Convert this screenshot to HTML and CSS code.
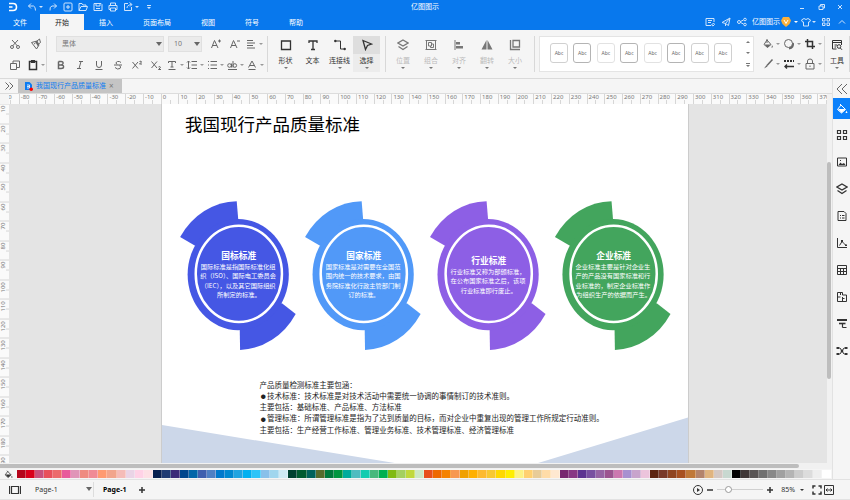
FILE: index.html
```html
<!DOCTYPE html>
<html lang="zh-CN">
<head>
    <meta charset="utf-8">
    <title>亿图图示</title>
    <link rel="stylesheet" href="styles.css">
    <script src="main.js" defer></script>
</head>
<body>
    <!-- 图标 -->
    <svg class="sprite" aria-hidden="true">
        <symbol id="i-undo" viewBox="0 0 12 12"><path d="M5 2.500 2.500 5 5 7.500M2.500 5H7.500Q9.500 5.500 9.500 9.500"/></symbol>
        <symbol id="i-redo" viewBox="0 0 12 12"><path d="M7 2.500 9.500 5 7 7.500M9.500 5H5Q2.500 5.500 3 9.500"/></symbol>
        <symbol id="i-new" viewBox="0 0 12 12"><rect x="2" y="2" width="8" height="8" rx="1"/><path d="M6 4v4M4 6h4"/></symbol>
        <symbol id="i-open" viewBox="0 0 12 12"><path d="M2 9.500V2.500H5L6 4H9V5.500M2 9.500 4 5.500H10.500L9 9.500Z"/></symbol>
        <symbol id="i-save" viewBox="0 0 12 12"><path d="M2 2.500H9L10 3.500V9.500H2ZM4 2.500V5H8V2.500M4 7.500H8"/></symbol>
        <symbol id="i-print" viewBox="0 0 12 12"><path d="M3.500 4V2H8.500V4M3.500 8.500H2V4.500H10V8.500H8.500M3.500 7H8.500V10H3.500Z"/></symbol>
        <symbol id="i-export" viewBox="0 0 12 12"><path d="M6 2.500H2.500V9.500H9.500V6M5 7Q5 4 9.500 3.500M7.500 1.500 10 3.500 8 5.500"/></symbol>
        <symbol id="i-more" viewBox="0 0 12 12"><path d="M4 4.500H8"/><path class="fill" d="M4 6H8L6 8Z"/></symbol>
        <symbol id="i-min" viewBox="0 0 12 12"><path d="M4 7.500H8"/></symbol>
        <symbol id="i-restore" viewBox="0 0 12 12"><path d="M4 5H8V8.500H4ZM5.500 5V3.500H9.500V7H8"/></symbol>
        <symbol id="i-close" viewBox="0 0 12 12"><path d="M4 4 8 8M8 4 4 8"/></symbol>
        <symbol id="i-note" viewBox="0 0 12 12"><path d="M7 9.500H2V2.500H10V6M4 4.500H8M4 6.500H7M7.500 9 9.500 7 10.500 8.500 9 10Z"/></symbol>
        <symbol id="i-send" viewBox="0 0 12 12"><path d="M2 6.500 10 2 8.500 9.500 5.500 7.500ZM5.500 7.500 10 2M5.500 7.500V10"/></symbol>
        <symbol id="i-share" viewBox="0 0 12 12"><circle cx="3" cy="6" r="1.500"/><circle cx="9" cy="3.500" r="1.300"/><circle cx="9" cy="8.500" r="1.300"/><path d="M4.500 5.500 7.500 4M4.500 6.500 7.500 8"/></symbol>
        <symbol id="i-vip" viewBox="0 0 12 12"><path d="M3 1H9L11 4.500 9.500 8 6 11 2.500 8 1 4.500Z" fill="#fbb03b" stroke="none"/><path d="M4 4 6 7.500 8 4" stroke="#fff"/></symbol>
        <symbol id="i-shirt" viewBox="0 0 12 12"><path d="M4 2.500 1.500 4 2.500 6H3.500V10H8.500V6H9.500L10.500 4 8 2.500Q6 4.500 4 2.500Z"/></symbol>
        <symbol id="i-apps" viewBox="0 0 12 12"><path d="M2.500 2.500h2.500v2.500h-2.500zM7 2.500h2.500v2.500h-2.500zM2.500 7h2.500v2.500h-2.500zM7 7h2.500v2.500h-2.500z"/></symbol>
        <symbol id="i-up" viewBox="0 0 12 12"><path d="M3 7.500 6 4.500 9 7.500"/></symbol>

        <symbol id="i-cut" viewBox="0 0 12 12"><path d="M3 2 8.500 8M9 2 3.500 8"/><circle cx="3" cy="9" r="1.500"/><circle cx="9" cy="9" r="1.500"/></symbol>
        <symbol id="i-brush" viewBox="0 0 12 12"><path d="M1.500 4.500 7 3 9 7 6.500 11ZM7 3 9.500 1 10.500 4.500 8.500 6M4 6 5.500 5"/><path class="fill" d="M5 3.500 7 3 9 7 8 8.500Z"/></symbol>
        <symbol id="i-copy" viewBox="0 0 12 12"><path d="M1.500 4.500H7.500V10.500H1.500ZM4 4.500V2H10.500V8.500H7.500"/></symbol>
        <symbol id="i-paste" viewBox="0 0 12 12"><path d="M2.500 2.500H9.500V10.500H2.500Z" stroke-width="1.500"/><path class="fill" d="M4 1H8V4H4Z"/></symbol>
        <symbol id="i-grow" viewBox="0 0 12 12"><path d="M1.500 10 4.500 2.500 8 10M2.500 7.500H7M8 3h3M9.500 1.500v3"/></symbol>
        <symbol id="i-shrink" viewBox="0 0 12 12"><path d="M1.500 10 4.500 2.500 8 10M2.500 7.500H7M8 3h3"/></symbol>
        <symbol id="i-align" viewBox="0 0 12 12"><path d="M2 2.500H8M2 5H10M2 7.500H8M2 10H10"/></symbol>
        <symbol id="i-bold" viewBox="0 0 12 12"><path d="M3.500 2.500H6Q8.500 2.500 8 4.500 7.500 6 6 6H3.500M6 6Q9 6 8.500 8 8.500 9.500 6 9.500H3.500V2.500" stroke-width="1.500"/></symbol>
        <symbol id="i-italic" viewBox="0 0 12 12"><path d="M5 2.500H9M3 9.500H7M7 2.500 5 9.500"/></symbol>
        <symbol id="i-under" viewBox="0 0 12 12"><path d="M3.500 2V6Q3.500 8.500 6 8.500T8.500 6V2M2.500 10.500H9.500"/></symbol>
        <symbol id="i-strike" viewBox="0 0 12 12"><path d="M9 3.500Q7.500 2 5.500 2.500 2.500 3.500 5 5.500M7.500 6.500Q9.500 8 8 9.500 5.500 11 3 8.500M2 6H10"/></symbol>
        <symbol id="i-sup" viewBox="0 0 12 12"><path d="M1.500 3 7 9.500M7 3 1.500 9.500M8.500 2.500Q10.500 1.500 10.500 3L8.500 5H11"/></symbol>
        <symbol id="i-sub" viewBox="0 0 12 12"><path d="M1.500 2.500 7 9M7 2.500 1.500 9M8.500 8Q10.500 7 10.500 8.500L8.500 10.500H11"/></symbol>
        <symbol id="i-case" viewBox="0 0 12 12"><path d="M2.500 4V2.500H9.500V4M6 2.500V8M4.500 8H7.500M2.500 10.500H9.500"/></symbol>
        <symbol id="i-spacing" viewBox="0 0 12 12"><path d="M5.500 2.500H11M5.500 6H11M5.500 9.500H11M2.500 2V10M1 3.500 2.500 2 4 3.500M1 8.500 2.500 10 4 8.500"/></symbol>
        <symbol id="i-list" viewBox="0 0 12 12"><path d="M4.500 2.500H11M4.500 6H11M4.500 9.500H11M2 2.500h1M2 6h1M2 9.500h1"/></symbol>
        <symbol id="i-ab" viewBox="0 0 12 12"><circle cx="3.500" cy="6.500" r="1.800"/><path d="M5.500 4.500V8.500M7 2V8.500M2 10.500H11"/><circle cx="8.800" cy="6.500" r="1.800"/></symbol>
        <symbol id="i-color" viewBox="0 0 12 12"><path d="M2.500 8.500 6 2 9.500 8.500M4 6.500H8M2.500 10.500H9.500"/></symbol>

        <symbol id="i-shape" viewBox="0 0 12 12"><path d="M1.500 2H10.500V10.500H1.500Z" stroke-width="1.300"/></symbol>
        <symbol id="i-text" viewBox="0 0 12 12"><path d="M2 4V2H10V4M6 2V10.500M4 10.500H8" stroke-width="1.300"/></symbol>
        <symbol id="i-line" viewBox="0 0 12 12"><path d="M1.500 2H6.500V10H10.500" stroke-width="1"/><circle class="fill" cx="1.300" cy="2" r="1.200"/><circle class="fill" cx="10.700" cy="10" r="1.200"/></symbol>
        <symbol id="i-select" viewBox="0 0 12 12"><path d="M2 1.500 10.500 5 6.500 6.500 4.500 10.500Z" stroke-width="1.300"/></symbol>
        <symbol id="i-layer" viewBox="0 0 12 12"><path d="M6 1 11 4 6 7 1 4ZM1.500 7.500 6 10.500 10.500 7.500" stroke-width="1.300"/></symbol>
        <symbol id="i-group" viewBox="0 0 12 12"><path d="M1.500 1.500H10.500V10.500H1.500ZM3.500 3.500H6.500V7H3.500ZM6.500 5H8.500V8.500H5.500V7"/><path d="M.5 1.500h2M9.500 1.500h2M.5 10.500h2M9.500 10.500h2"/></symbol>
        <symbol id="i-arrange" viewBox="0 0 12 12"><path d="M2 1V11"/><path class="fill" d="M3 3H7V5.500H3ZM3 7H10V9.500H3Z"/></symbol>
        <symbol id="i-flip" viewBox="0 0 12 12"><path class="fill" d="M5.500 1V10.500H.5ZM6.500 1V10.500H11.500Z"/></symbol>
        <symbol id="i-size" viewBox="0 0 12 12"><path d="M4 1.500H10.500V8H4ZM1.500 1V10.500H11" stroke-width="1.300"/></symbol>

        <symbol id="i-fill" viewBox="0 0 12 12"><path d="M5 2 9 6.500 5.500 9.500 2 6.500ZM5 1V5"/><path class="fill" d="M2.500 6.500H9L5.500 9.500ZM10 7 11 9 9.500 10Z"/></symbol>
        <symbol id="i-shadow" viewBox="0 0 12 12"><circle cx="5.500" cy="5.500" r="4"/><path d="M10 5Q11 9.500 6 10.500" stroke-width="1.800"/></symbol>
        <symbol id="i-crop" viewBox="0 0 12 12"><path d="M3.500 1V8.500H11M1 3.500H8.500V11" stroke-width="1.500"/></symbol>
        <symbol id="i-pen" viewBox="0 0 12 12"><path d="M10.500 1.500 5 7.500" stroke-width="1.500"/><path class="fill" d="M4.500 7 5.500 8.500 2 10.500Z"/></symbol>
        <symbol id="i-dash" viewBox="0 0 12 12"><path d="M1 3H3M4 3H6M7 3H9M10 3H11" stroke-width="1.800"/><path d="M2 8.500H11M4 6.500 2 8.500 4 10.500" stroke-width="1.400"/></symbol>
        <symbol id="i-lock" viewBox="0 0 12 12"><path d="M2 5.500H10V11H2ZM3.500 5.500V3Q3.500 1 6 1T8.500 3V5.500M6 7.500V9"/></symbol>
        <symbol id="i-tools" viewBox="0 0 12 12"><path d="M5.500 10H1.500V1.500H10.500V6M1.500 3.500H10.500M3.500 6H6M3.500 8H5"/><circle cx="8" cy="7.500" r="1.800"/><path d="M9.300 9 11 10.800"/></symbol>

        <symbol id="i-left2" viewBox="0 0 12 12"><path d="M6 1 1 6 6 11M11 1 6 6 11 11"/></symbol>
        <symbol id="i-right2" viewBox="0 0 12 12"><path d="M2.500 2.500 6 6 2.500 9.500M6.500 2.500 10 6 6.500 9.500"/></symbol>
        <symbol id="i-bucket" viewBox="0 0 12 12"><path d="M5 2 9.500 6.500 5.500 10 1.500 6.500Z"/><path d="M4 1 5.500 2.500"/><path class="fill" d="M2 6H9.500L5.500 10Z"/><path class="fill" d="M10.500 7.500 11.500 10H9.500Z"/></symbol>
        <symbol id="i-blocks" viewBox="0 0 12 12"><path d="M1.500 1.500h3v3h-3zM7.500 1.500h3v3h-3zM1.500 7.500h3v3h-3zM7.500 7.500h3v3h-3z" stroke-width="1.200"/></symbol>
        <symbol id="i-image" viewBox="0 0 12 12"><path d="M1.500 2H10.500V10H1.500Z"/><path class="fill" d="M2.500 9 4.500 6.500 6 8 8 7 9.500 9Z"/><path d="M4 4.500h1"/></symbol>
        <symbol id="i-doc" viewBox="0 0 12 12"><path d="M2 1.500H8L10 3.500V10.500H2ZM4 5.500h1M6 5.500h2.500M4 8h1M6 8h2.500"/></symbol>
        <symbol id="i-chart" viewBox="0 0 12 12"><path d="M1.500 1V10.500H11"/><path d="M3.500 8.500 6 4.500 8 6.500 10 8.500"/><path class="fill" d="M5 3h2v2h-2zM9 7.500h2v1.500h-2z"/></symbol>
        <symbol id="i-table" viewBox="0 0 12 12"><path d="M1.500 1.500H10.500V10.500H1.500ZM1.500 4.500H10.500M1.500 7.500H10.500M4.500 4.500V10.500M7.500 4.500V10.500"/></symbol>
        <symbol id="i-plan" viewBox="0 0 12 12"><path d="M1.500 1.500H6.500V4H10.500V10.500H1.500ZM1.500 6H4.500M6.500 6V10.500M6.500 7.500H8.500M4.500 1.500V4"/></symbol>
        <symbol id="i-gantt" viewBox="0 0 12 12"><path d="M1 2H11" stroke-width="2"/><path d="M3 5.500H9.500" stroke-width="1.600"/><path d="M6.500 5.500V9.500M6.500 9.500H10.500" stroke-width="1.200"/></symbol>
        <symbol id="i-mind" viewBox="0 0 12 12"><path d="M2 3H4L8 9H10M2 9H4L8 3H10"/><path class="fill" d="M.5 2h2.500v2h-2.500zM9 2h2.500v2h-2.500zM.5 8h2.500v2h-2.500zM9 8h2.500v2h-2.500zM4.800 4.800h2.400v2.400h-2.400z"/></symbol>

        <symbol id="i-pages" viewBox="0 0 12 12"><path d="M2.500 2.500H9.500V9.500H2.500ZM.5 2V10M11.500 2V10" stroke-width="1.200"/></symbol>
        <symbol id="i-plus" viewBox="0 0 12 12"><path d="M6 3V9M3 6H9" stroke-width="1.500"/></symbol>
        <symbol id="i-minus" viewBox="0 0 12 12"><path d="M3 6H9" stroke-width="1.500"/></symbol>
        <symbol id="i-play" viewBox="0 0 12 12"><circle cx="6" cy="6" r="4.500"/><path class="fill" d="M5 4 8 6 5 8Z"/></symbol>
        <symbol id="i-full" viewBox="0 0 12 12"><path d="M2 4.500V2H4.500M7.500 2H10V4.500M10 7.500V10H7.500M4.500 10H2V7.500" stroke-width="1.500"/></symbol>
        <symbol id="i-fit" viewBox="0 0 12 12"><path d="M1.500 1.500H10.500V10.500H1.500ZM3.500 6H8.500M4.500 4.500 3 6 4.500 7.500M7.500 4.500 9 6 7.500 7.500"/></symbol>
    </svg>

    <header class="header">
        <div class="titlebar">
            <div class="quick">
                <svg class="logo" viewBox="0 0 10 10"><path d="M1 1.500H5Q8.500 1.500 8.500 5T5 8.500H1M1 5H4.500" fill="none" stroke="#fff" stroke-width="1.600"/></svg>
                <button class="icon-btn" aria-label="撤销"><svg><use href="#i-undo"/></svg><i class="caret"></i></button>
                <button class="icon-btn" aria-label="恢复"><svg><use href="#i-redo"/></svg></button>
                <button class="icon-btn" aria-label="新建"><svg><use href="#i-new"/></svg></button>
                <button class="icon-btn" aria-label="打开"><svg><use href="#i-open"/></svg></button>
                <button class="icon-btn" aria-label="保存"><svg><use href="#i-save"/></svg></button>
                <button class="icon-btn" aria-label="打印"><svg><use href="#i-print"/></svg></button>
                <button class="icon-btn" aria-label="导出"><svg><use href="#i-export"/></svg><i class="caret"></i></button>
                <button class="icon-btn" aria-label="更多"><svg><use href="#i-more"/></svg></button>
            </div>
            <h1 class="app-name">亿图图示</h1>
            <div class="window-btns">
                <button class="icon-btn" aria-label="最小化"><svg><use href="#i-min"/></svg></button>
                <button class="icon-btn" aria-label="还原"><svg><use href="#i-restore"/></svg></button>
                <button class="icon-btn" aria-label="关闭"><svg><use href="#i-close"/></svg></button>
            </div>
        </div>
        <div class="menubar">
            <nav class="menu">
                <a class="file" href="#">文件</a>
                <a class="active" href="#">开始</a>
                <a href="#">插入</a>
                <a href="#">页面布局</a>
                <a href="#">视图</a>
                <a href="#">符号</a>
                <a href="#">帮助</a>
            </nav>
            <div class="account">
                <button class="icon-btn" aria-label="备注"><svg><use href="#i-note"/></svg></button>
                <button class="icon-btn" aria-label="发送"><svg><use href="#i-send"/></svg></button>
                <button class="icon-btn" aria-label="分享"><svg><use href="#i-share"/></svg></button>
                <button class="icon-btn user">亿图图示<svg><use href="#i-vip"/></svg><i class="caret"></i></button>
                <button class="icon-btn" aria-label="主题"><svg><use href="#i-shirt"/></svg><i class="caret"></i></button>
                <button class="icon-btn" aria-label="应用"><svg><use href="#i-apps"/></svg></button>
                <button class="icon-btn" aria-label="收起"><svg><use href="#i-up"/></svg></button>
            </div>
        </div>
    </header>

    <div class="ribbon">
        <div class="group clipboard">
            <button class="tool" aria-label="剪切"><svg><use href="#i-cut"/></svg></button>
            <button class="tool" aria-label="格式刷"><svg><use href="#i-brush"/></svg></button>
            <button class="tool" aria-label="复制"><svg><use href="#i-copy"/></svg></button>
            <button class="tool dark" aria-label="粘贴"><svg><use href="#i-paste"/></svg><i class="caret"></i></button>
        </div>
        <div class="group font">
            <div class="row">
                <label class="drop family"><select aria-label="字体"><option>黑体</option></select></label>
                <label class="drop size"><select aria-label="字号"><option>10</option></select></label>
                <button class="tool" aria-label="增大字号"><svg><use href="#i-grow"/></svg></button>
                <button class="tool" aria-label="减小字号"><svg><use href="#i-shrink"/></svg></button>
                <button class="tool wide" aria-label="对齐方式"><svg><use href="#i-align"/></svg><i class="caret"></i></button>
            </div>
            <div class="row">
                <button class="tool" aria-label="加粗"><svg><use href="#i-bold"/></svg></button>
                <button class="tool" aria-label="斜体"><svg><use href="#i-italic"/></svg></button>
                <button class="tool" aria-label="下划线"><svg><use href="#i-under"/></svg></button>
                <button class="tool" aria-label="删除线"><svg><use href="#i-strike"/></svg></button>
                <button class="tool" aria-label="上标"><svg><use href="#i-sup"/></svg></button>
                <button class="tool" aria-label="下标"><svg><use href="#i-sub"/></svg></button>
                <button class="tool wide" aria-label="大小写"><svg><use href="#i-case"/></svg><i class="caret"></i></button>
                <button class="tool wide" aria-label="行距"><svg><use href="#i-spacing"/></svg><i class="caret"></i></button>
                <button class="tool wide" aria-label="列表"><svg><use href="#i-list"/></svg><i class="caret"></i></button>
                <button class="tool wide" aria-label="突出显示"><svg><use href="#i-ab"/></svg><i class="caret"></i></button>
                <button class="tool wide" aria-label="字体颜色"><svg><use href="#i-color"/></svg><i class="caret"></i></button>
            </div>
        </div>
        <div class="group draw">
            <button class="big"><svg><use href="#i-shape"/></svg>形状<i class="caret"></i></button>
            <button class="big"><svg><use href="#i-text"/></svg>文本</button>
            <button class="big"><svg><use href="#i-line"/></svg>连接线<i class="caret"></i></button>
            <button class="big selected"><svg><use href="#i-select"/></svg>选择<i class="caret"></i></button>
        </div>
        <div class="group arrange">
            <button class="big" disabled><svg><use href="#i-layer"/></svg>位置<i class="caret"></i></button>
            <button class="big" disabled><svg><use href="#i-group"/></svg>组合<i class="caret"></i></button>
            <button class="big" disabled><svg><use href="#i-arrange"/></svg>对齐<i class="caret"></i></button>
            <button class="big" disabled><svg><use href="#i-flip"/></svg>翻转<i class="caret"></i></button>
            <button class="big" disabled><svg><use href="#i-size"/></svg>大小<i class="caret"></i></button>
        </div>
        <div class="gallery">
            <div class="styles">
                <button>Abc</button>
                <button class="strong">Abc</button>
                <button class="faint">Abc</button>
                <button class="strong">Abc</button>
                <button class="faint">Abc</button>
                <button class="strong">Abc</button>
                <button>Abc</button>
                <button>Abc</button>
            </div>
            <div class="scroll-btns">
                <button aria-label="上一行"><i class="caret flip"></i></button>
                <button aria-label="下一行"><i class="caret"></i></button>
                <button class="expand-btn" aria-label="展开"><i class="caret"></i></button>
            </div>
        </div>
        <div class="group effects">
            <button class="tool" aria-label="填充"><svg><use href="#i-fill"/></svg><i class="caret"></i></button>
            <button class="tool" aria-label="阴影"><svg><use href="#i-shadow"/></svg><i class="caret"></i></button>
            <button class="tool dark" aria-label="裁剪"><svg><use href="#i-crop"/></svg><i class="caret"></i></button>
            <button class="tool" aria-label="线条"><svg><use href="#i-pen"/></svg><i class="caret"></i></button>
            <button class="tool dark" aria-label="线型"><svg><use href="#i-dash"/></svg><i class="caret"></i></button>
            <button class="tool" aria-label="锁定"><svg><use href="#i-lock"/></svg><i class="caret"></i></button>
        </div>
        <div class="group tools">
            <button class="big"><svg><use href="#i-tools"/></svg>工具<i class="caret"></i></button>
        </div>
    </div>

    <main class="main">
        <div class="workspace">
            <div class="doc-tabs">
                <button class="expand" aria-label="展开符号库"><svg><use href="#i-right2"/></svg></button>
                <div class="doc-tab">
                    <svg class="doc-icon" viewBox="0 0 9 9"><path d="M1 0H5.500L8 2.500V8H1Z" fill="#0a7bf2"/><path d="M3 3H5.500V6H3M3 4.500H5" fill="none" stroke="#fff" stroke-width=".8"/><circle cx="7.200" cy="7.200" r="1.800" fill="#f00"/></svg>
                    <a href="#">我国现行产品质量标准</a>
                    <button aria-label="关闭文档">×</button>
                </div>
            </div>
            <div class="board">
                <div class="ruler-x"><div class="marks" id="rulerX"></div></div>
                <div class="ruler-y"><div class="marks" id="rulerY"></div></div>
                <div class="canvas">
                    <!-- A4 横向，单位 pt -->
                    <svg class="sheet" viewBox="0 0 842 595">
                        <defs>
                            <g id="badge">
                                <path d="M90.600 1.600A108 120 0 0 0 0 59L24 73 93 62V31Z"/>
                                <path d="M96 239.600A108 120 0 0 0 185 182L163 165 95 180Z"/>
                                <ellipse cx="93" cy="119" rx="81" ry="89"/>
                                <ellipse cx="94" cy="118" rx="69" ry="77" fill="none" stroke="#fff" stroke-width="4"/>
                            </g>
                        </defs>
                        <polygon class="hill" points="0,514 497,595 0,595"/>
                        <polygon class="hill" points="842,502 842,595 535,595"/>
                        <text class="title" x="37" y="43">我国现行产品质量标准</text>

                        <g transform="translate(29 154)">
                            <use href="#badge" fill="#4557e4"/>
                            <text class="name" x="94" y="94">国标标准</text>
                            <text class="desc">
                                <tspan x="94" y="110">国际标准是指国际标准化组</tspan>
                                <tspan x="94" y="125">织（ISO）、国际电工委员会</tspan>
                                <tspan x="94" y="140">（IEC），以及其它国际组织</tspan>
                                <tspan x="94" y="155">所制定的标准。</tspan>
                            </text>
                        </g>
                        <g transform="translate(229 154)">
                            <use href="#badge" fill="#5199f8"/>
                            <text class="name" x="94" y="94">国家标准</text>
                            <text class="desc">
                                <tspan x="94" y="110">国家标准是对需要在全国范</tspan>
                                <tspan x="94" y="125">围内统一的技术要求，由国</tspan>
                                <tspan x="94" y="140">务院标准化行政主管部门制</tspan>
                                <tspan x="94" y="155">订的标准。</tspan>
                            </text>
                        </g>
                        <g transform="translate(429 154)">
                            <use href="#badge" fill="#8d5fe5"/>
                            <text class="name" x="94" y="102">行业标准</text>
                            <text class="desc">
                                <tspan x="94" y="118">行业标准又称为部颁标准，</tspan>
                                <tspan x="94" y="133">在公布国家标准之后，该项</tspan>
                                <tspan x="94" y="148">行业标准即行废止。</tspan>
                            </text>
                        </g>
                        <g transform="translate(629 154)">
                            <use href="#badge" fill="#43a55d"/>
                            <text class="name" x="94" y="94">企业标准</text>
                            <text class="desc">
                                <tspan x="94" y="110">企业标准主要是针对企业生</tspan>
                                <tspan x="94" y="125">产的产品没有国家标准和行</tspan>
                                <tspan x="94" y="140">业标准的，制定企业标准作</tspan>
                                <tspan x="94" y="155">为组织生产的依据而产生。</tspan>
                            </text>
                        </g>

                        <text class="notes">
                            <tspan x="156" y="454">产品质量检测标准主要包涵：</tspan>
                            <tspan class="dot" x="158" y="471">●</tspan><tspan x="168" y="472">技术标准：技术标准是对技术活动中需要统一协调的事情制订的技术准则。</tspan>
                            <tspan x="156" y="490">主要包括：基础标准、产品标准、方法标准</tspan>
                            <tspan class="dot" x="158" y="507">●</tspan><tspan x="168" y="508">管理标准：所谓管理标准是指为了达到质量的目标，而对企业中重复出现的管理工作所规定行动准则。</tspan>
                            <tspan x="156" y="526">主要包括：生产经营工作标准、管理业务标准、技术管理标准、经济管理标准</tspan>
                        </text>
                    </svg>
                </div>
                <div class="scroll-y"><div class="thumb"></div></div>
                <div class="scroll-x"><div class="thumb"></div></div>
            </div>
            <div class="palette">
                <button class="bucket" aria-label="填充颜色"><svg><use href="#i-bucket"/></svg></button>
                <div class="swatches" id="swatches"></div>
            </div>
        </div>
        <aside class="sidebar">
            <button class="collapse" aria-label="收起面板"><svg><use href="#i-left2"/></svg></button>
            <button class="active" aria-label="样式"><svg><use href="#i-bucket"/></svg></button>
            <button aria-label="符号"><svg><use href="#i-blocks"/></svg></button>
            <button aria-label="图片"><svg><use href="#i-image"/></svg></button>
            <button aria-label="图层"><svg><use href="#i-layer"/></svg></button>
            <button aria-label="页面"><svg><use href="#i-doc"/></svg></button>
            <button aria-label="图表"><svg><use href="#i-chart"/></svg></button>
            <button aria-label="表格"><svg><use href="#i-table"/></svg></button>
            <button aria-label="平面图"><svg><use href="#i-plan"/></svg></button>
            <button aria-label="甘特图"><svg><use href="#i-gantt"/></svg></button>
            <button aria-label="思维导图"><svg><use href="#i-mind"/></svg></button>
        </aside>
    </main>

    <footer class="statusbar">
        <button class="pages" aria-label="页面列表"><svg><use href="#i-pages"/></svg></button>
        <label class="drop page-select"><select aria-label="当前页"><option>Page-1</option></select></label>
        <a class="page-tab" href="#">Page-1</a>
        <button aria-label="添加页"><svg><use href="#i-plus"/></svg></button>
        <div class="zoom">
            <button aria-label="播放"><svg><use href="#i-play"/></svg></button>
            <button aria-label="缩小"><svg><use href="#i-minus"/></svg></button>
            <input type="range" min="0" max="400" value="85" aria-label="缩放">
            <button aria-label="放大"><svg><use href="#i-plus"/></svg></button>
            <button class="percent">85%<i class="caret"></i></button>
            <button aria-label="全屏"><svg><use href="#i-full"/></svg></button>
            <button aria-label="适合宽度"><svg><use href="#i-fit"/></svg></button>
        </div>
    </footer>
</body>
</html>
```

FILE: styles.css
```css
* {
    box-sizing: border-box;
    margin: 0;
    padding: 0;
}

body {
    display: flex;
    flex-direction: column;
    height: 100vh;
    overflow: hidden;
    background: #f5f5f5;
    color: #333;
    font-family: "Noto Sans", "Noto Sans CJK SC", sans-serif;
    font-size: 7px;
    line-height: 10px;
}

button, select {
    border: 0;
    background: none;
    color: inherit;
    font: inherit;
}

button {
    display: flex;
    align-items: center;
    justify-content: center;
}

button svg {
    flex: none;
    width: 12px;
    height: 12px;
}

a {
    color: inherit;
    text-decoration: none;
}

.sprite {
    display: none;
}

symbol {
    fill: none;
    stroke: currentColor;
    stroke-width: 1;
}

.fill {
    fill: currentColor;
    stroke: none;
}

.caret {
    flex: none;
    border: 2px solid transparent;
    border-top-color: currentColor;
    border-bottom: 0;
}

/* 标题栏 */
.header {
    flex: none;
    background: #0878ed;
    color: #fff;
}

.titlebar {
    display: grid;
    grid-template-columns: 1fr auto 1fr;
    align-items: center;
    height: 14px;
}

.titlebar .icon-btn, .account .icon-btn {
    color: #cfe4fc;
}

.quick {
    display: flex;
    align-items: center;
    gap: 3px;
    padding-left: 8px;
}

.logo {
    width: 10px;
    height: 10px;
    margin-right: 5px;
}

.quick .icon-btn .caret {
    margin: 0 1px;
}

.app-name {
    font-size: 7px;
    font-weight: normal;
}

.window-btns {
    display: flex;
    justify-content: flex-end;
    gap: 7px;
    padding-right: 4px;
}

.menubar {
    display: flex;
    justify-content: space-between;
    height: 16px;
}

.menu {
    display: flex;
}

.menu a {
    padding: 0 15px;
    line-height: 17px;
}

.menu .file {
    padding: 0 13px;
}

.menu .active {
    background: #f5f5f5;
    color: #222;
}

.account {
    display: flex;
    align-items: center;
    gap: 4px;
    padding-right: 2px;
}

.account .icon-btn.user {
    margin-right: -2px;
    color: #fff;
}

.account .user .caret {
    margin-left: 2px;
}

/* 工具栏 */
.ribbon {
    flex: none;
    display: flex;
    height: 49px;
    padding: 6px 0;
    border-bottom: 1px solid #dadada;
}

.group {
    flex: none;
    border-right: 1px solid #d8d8d8;
}

.tool {
    width: 19px;
    height: 16px;
    color: #666;
}

.tool .caret {
    margin-left: 2px;
    color: #999;
}

.tool.wide {
    width: 20px;
}

.tool.dark {
    color: #333;
}

.clipboard {
    display: grid;
    grid-template-columns: 20px 20px;
    justify-content: end;
    align-content: center;
    gap: 5px 1px;
    width: 47px;
}

.font {
    display: flex;
    flex-direction: column;
    justify-content: center;
    gap: 5px;
    width: 221px;
    padding-left: 4px;
}

.row {
    display: flex;
}

.drop {
    display: flex;
    position: relative;
}

.drop::after {
    content: "";
    position: absolute;
    top: 5px;
    right: 1px;
    border: 3px solid transparent;
    border-top: 4px solid #666;
    border-bottom: 0;
    pointer-events: none;
}

.drop select {
    width: 100%;
    height: 100%;
    padding-left: 5px;
    appearance: none;
}

.font .drop {
    height: 16px;
    margin-right: 4px;
    background: #ebebeb;
    border: 1px solid #e0e0e0;
    color: #777;
}

.font .family {
    width: 108px;
    margin-left: 5px;
}

.font .size {
    width: 34px;
}

.draw {
    display: flex;
    padding: 0 5px 0 4px;
}

.arrange {
    display: flex;
    padding: 0 5px 0 3px;
}

.big {
    flex-direction: column;
    justify-content: flex-start;
    width: 27px;
    padding-top: 3px;
}

.big svg {
    margin-bottom: 5px;
}

.big .caret {
    margin-top: 1px;
    color: #777;
}

.big.selected {
    background: linear-gradient(#dedede 50%, #ececec 50%);
}

.arrange .big {
    width: 28px;
    color: #bcbcbc;
}

.arrange .big svg {
    color: #777;
}

.gallery {
    flex: 1;
    display: flex;
    justify-content: space-between;
    margin: 0 0 0 4px;
    background: #fff;
    border: 1px solid #e4e4e4;
}

.styles {
    flex: 1;
    display: flex;
    align-items: center;
    justify-content: space-between;
    padding: 0 11px 3px 10px;
}

.styles button {
    width: 18px;
    height: 20px;
    border: 1px solid #d0d0d0;
    border-radius: 3px;
    color: #666;
    font-size: 5px;
}

.styles .strong {
    border-color: #b4b4b4;
}

.styles .faint {
    border-color: #e2e2e2;
}

.scroll-btns {
    display: flex;
    flex-direction: column;
    justify-content: space-around;
    width: 10px;
    color: #777;
}

.caret.flip {
    transform: rotate(180deg);
}

.expand-btn {
    flex-direction: column;
}

.expand-btn::before {
    content: "";
    width: 4px;
    height: 1px;
    margin-bottom: 1px;
    background: #777;
}

.effects {
    display: grid;
    grid-template-columns: repeat(3, 21px);
    align-content: center;
    gap: 4px 0;
    padding: 0 1px 0 6px;
}

.effects .tool {
    width: 21px;
}

.tools {
    width: 25px;
}

.tools .big {
    width: 24px;
}

/* 主区域 */
.main {
    flex: 1;
    display: flex;
    min-height: 0;
}

.workspace {
    flex: 1;
    display: flex;
    flex-direction: column;
    min-width: 0;
}

.doc-tabs {
    flex: none;
    display: flex;
    height: 14px;
}

.expand {
    width: 18px;
    color: #666;
}

.doc-tab {
    display: flex;
    align-items: center;
    padding: 0 8px 0 6px;
    background: #c4c4c4;
    color: #0a7bf2;
}

.doc-icon {
    width: 9px;
    height: 9px;
    margin-right: 3px;
}

.doc-tab button {
    margin-left: 3px;
    color: #777;
    font-size: 8px;
}

.board {
    flex: 1;
    display: grid;
    grid-template-columns: 9px 1fr 5px;
    grid-template-rows: 10px 1fr 6px;
    min-height: 0;
    border-top: 1px solid #dcdcdc;
}

.ruler-x, .ruler-y {
    overflow: hidden;
    background: #fafafa;
    color: #777;
    font-size: 6px;
    line-height: 7px;
}

.ruler-x {
    grid-column: 2;
}

.ruler-y {
    grid-column: 1;
    grid-row: 2;
}

.marks {
    display: grid;
}

.ruler-x .marks {
    grid-auto-flow: column;
    grid-auto-columns: minmax(0, 1fr);
    height: 100%;
    margin: 0 -8px;
}

.ruler-y .marks {
    grid-auto-rows: minmax(0, 1fr);
    height: calc(100% + 12px);
}

.ruler-x span {
    padding-left: 1px;
    border-left: 1px solid #d6d6d6;
    background: linear-gradient(#d6d6d6, #d6d6d6) 50% 100% / 1px 4px no-repeat;
}

.ruler-y span {
    padding-bottom: 1px;
    border-bottom: 1px solid #d6d6d6;
    background: linear-gradient(#d6d6d6, #d6d6d6) 0 50% / 3px 1px no-repeat;
    writing-mode: vertical-rl;
    text-align: right;
    transform: rotate(180deg);
}

.canvas {
    grid-column: 2;
    grid-row: 2;
    overflow: hidden;
    padding: 0 138px 0 152px;
    background: #e4e4e4;
}

.sheet {
    display: block;
    width: 100%;
    background: #fff;
    border: solid #ccc;
    border-width: 0 1px;
    font-family: "Noto Sans CJK SC", sans-serif;
}

.hill {
    fill: #ccd7e9;
}

.title {
    font-size: 28px;
}

.name {
    fill: #fff;
    font-size: 14px;
    font-weight: bold;
    text-anchor: middle;
}

.desc {
    fill: #fff;
    font-size: 10px;
    text-anchor: middle;
}

.notes {
    fill: #222;
    font-size: 12px;
}

.dot {
    font-size: 8px;
}

.scroll-y {
    grid-column: 3;
    grid-row: 1 / 3;
    padding-top: 68px;
    background: #f1f1f1;
}

.scroll-y .thumb {
    width: 4px;
    height: 72%;
    border-radius: 2px;
    background: #bdbdbd;
}

.scroll-x {
    grid-column: 1 / 4;
    padding-top: 1px;
    background: #f1f1f1;
}

.scroll-x .thumb {
    width: 96%;
    height: 4px;
    border-radius: 0 2px 2px 0;
    background: #bdbdbd;
}

.palette {
    flex: none;
    display: flex;
    height: 10px;
    padding: 1px 1px 1px 0;
}

.bucket {
    width: 17px;
}

.bucket svg {
    width: 9px;
    height: 9px;
}

.swatches {
    flex: 1;
    display: flex;
}

.swatches button {
    flex: 1;
    border-right: 1px solid rgba(255, 255, 255, .3);
}

.sidebar {
    flex: none;
    width: 18px;
    border-left: 1px solid #e2e2e2;
}

.sidebar button {
    width: 100%;
    height: 27px;
}

.sidebar .collapse {
    height: 19px;
    color: #666;
}

.sidebar .active {
    height: 21px;
    margin-bottom: 2px;
    background: #0a80fb;
    color: #fff;
}

/* 状态栏 */
.statusbar {
    flex: none;
    display: flex;
    align-items: center;
    height: 21px;
    border-top: 1px solid #e2e2e2;
    border-bottom: 1px solid #e2e2e2;
}

.pages {
    width: 30px;
}

.page-select {
    width: 64px;
    height: 15px;
    border-right: 1px solid #ddd;
}

.page-tab {
    margin: 0 10px 0 9px;
    color: #000;
    font-weight: bold;
}

.zoom {
    display: flex;
    align-items: center;
    margin-left: auto;
    padding-right: 15px;
}

.zoom input {
    width: 46px;
    height: 8px;
    margin: 0 1px;
    background: linear-gradient(#d0d0d0, #d0d0d0) center / 100% 1px no-repeat;
    appearance: none;
}

.zoom input::-webkit-slider-thumb {
    width: 7px;
    height: 7px;
    border: 1px solid #999;
    border-radius: 50%;
    background: #fff;
    appearance: none;
}

.percent {
    gap: 5px;
    margin: 0 7px 0 5px;
}
```

FILE: main.js
```javascript
var colors = [
    'b5051b', 'd9001b', 'c9507c', 'e8505b', 'ec6a6c', 'e85a9b', 'e095b8', 'ef8a80', 'f08a95', 'ff9a70',
    'f2a58c', 'f5bcb8', 'ead4e6', 'ffd2e6', 'fde0e5', '0a1f50', '1f3a72', '3c2a78', '00468c', '0066a8',
    '3f5fae', '4f80c4', '0079cc', '0088d0', '20a4e0', '00b0f0', '2cc4f8', '8ac0ea', 'a0d6ee', 'cfeaf4',
    '004030', '005a30', '00625c', '566b2c', '00783c', '009640', '00ab9c', '50bcc0', '14ccb0', '46b87c',
    '00b050', '80ba10', 'a4d060', 'c0d83c', 'cde8c4', 'e8501c', 'ee6800', 'f58200', 'f79850', 'f0a000',
    'ffb000', 'fdba30', 'f8c832', 'ffd800', 'ffee00', 'fdf284', 'ffd070', 'e8cc98', 'ffdca8', 'ffe8d0',
    '782870', '883884', '5c3490', '7850a0', '9664a4', '9c5490', 'cc78b0', 'a890d0', 'c8a4cc', 'ecc4dc',
    '5c2410', '783828', '904420', 'a85020', 'c07838', 'b4846c', 'e0b480', 'd4c8c4', 'c8d8d0', '000000',
    '403838', '585454', '707070', '888888', 'a0a0a0', 'b4b4b4', 'cccccc', 'dcdcdc', 'eeeeee', 'ffffff'
];

// 标尺刻度
function drawRuler(id, from, to) {
    var ruler = document.getElementById(id);
    for (let i = from; i <= to; i += 10) {
        var mark = document.createElement('span');
        mark.textContent = i;
        ruler.appendChild(mark);
    }
}

drawRuler('rulerX', -90, 370);
drawRuler('rulerY', 10, 190);

// 色板
var swatches = document.getElementById('swatches');
for (let i = 0; i < colors.length; i ++) {
    var item = document.createElement('button');
    item.style.background = '#' + colors[i];
    item.setAttribute('aria-label', '#' + colors[i]);
    swatches.appendChild(item);
}
```
